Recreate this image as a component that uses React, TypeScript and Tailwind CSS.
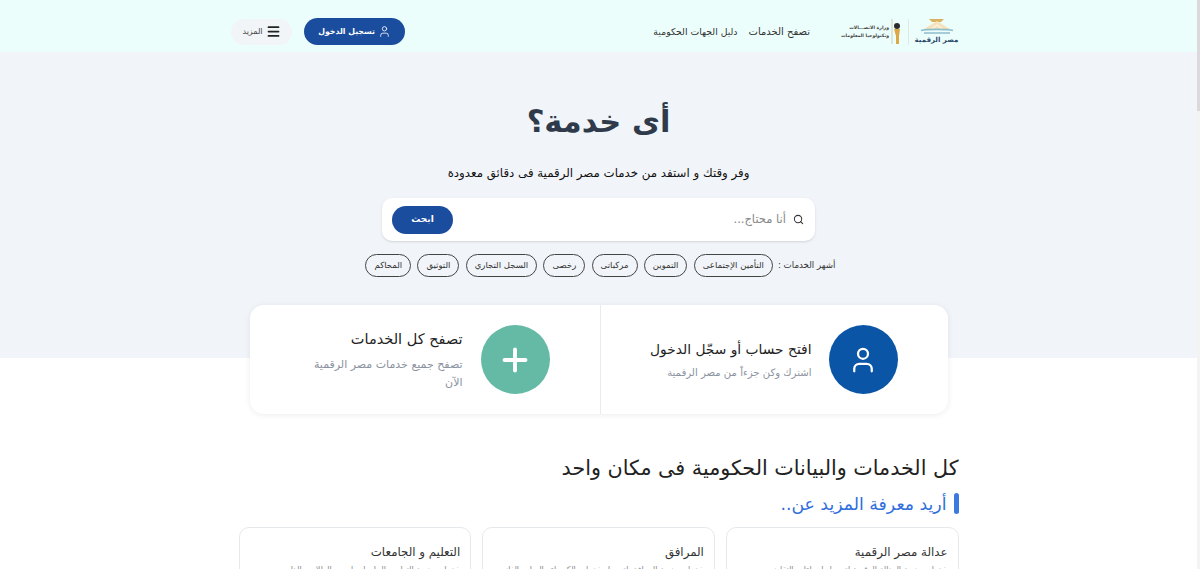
import React from 'react';
import { Menu, Plus, Search, User } from 'lucide-react';

const FONT = "font-['DejaVu_Sans',sans-serif]";

const POPULAR = ['التأمين الإجتماعى', 'التموين', 'مركباتى', 'رخصى', 'السجل التجاري', 'التوثيق', 'المحاكم'];

const TOPICS = [
    { title: 'عدالة مصر الرقمية', text: 'خدمات منصة العدالة الرقمية لتسهيل إجراءات التقاضي' },
    { title: 'المرافق', text: 'خدمات منصة المرافق لتسهيل خدمات الكهرباء والمياه والغاز' },
    { title: 'التعليم و الجامعات', text: 'خدمات منصة التعليم والجامعات لجميع الطلاب والدارسين' },
];

function Logo() {
    return (
        <div className="flex items-center gap-[6px]">
            <div className="flex w-[43px] flex-col items-center">
                <svg width="34" height="16" viewBox="0 0 34 16">
                    <path d="M9 1h15l-3 3h-9z" fill="#d9b25f" />
                    <path d="M4 11 17 3l13 8z" fill="#f6e3bb" />
                    <path d="M12 11l5-4 5 4" fill="none" stroke="#ffffff" strokeWidth="1" />
                    <path d="M1 12.5c5-1.5 27-1.5 32 0M4 15h26" fill="none" stroke="#8fbccb" strokeWidth="1.6" />
                </svg>
                <span className="text-[7px] leading-[12px] font-bold whitespace-nowrap text-[#2d4a6b]">مصر الرقمية</span>
            </div>
            <div className="h-[26px] w-px bg-[#dfe7e7]"></div>
            <div className="flex items-center gap-[2px]">
                <svg width="11" height="27" viewBox="0 0 11 27">
                    <path d="M1 1v25" stroke="#c9c3a8" strokeWidth="0.8" />
                    <circle cx="6" cy="8" r="3" fill="#2b2b2b" />
                    <path d="M3 11h6l-1 7v8H5v-8z" fill="#dca845" />
                </svg>
                <div className="w-[44px] text-[4.6px] leading-[8px] font-bold whitespace-nowrap text-[#444]">
                    <div>وزارة الاتصـــالات</div>
                    <div>وتكنولوجيا المعلومات</div>
                </div>
            </div>
        </div>
    );
}

function Header() {
    return (
        <header className="h-[52px] bg-[#ecfefb]">
            <div className="mr-[239px] flex h-full w-[727px] items-center justify-between pt-[11px]">
                <div className="flex items-center">
                    <Logo />
                    <a className="mr-[35px] text-[10px] text-[#333]">تصفح الخدمات</a>
                    <a className="mr-[11px] text-[9.3px] whitespace-nowrap text-[#333]">دليل الجهات الحكومية</a>
                </div>
                <div className="flex items-center gap-[12px]">
                    <button className="flex h-[27px] w-[101px] items-center justify-center gap-[3px] rounded-full bg-[#1b4d9e] text-[7.8px] font-bold text-white">
                        <User size={13} strokeWidth={1.5} />
                        تسجيل الدخول
                    </button>
                    <button className="flex h-[26px] w-[61px] items-center justify-center gap-[3px] rounded-full bg-[#f1f5f7] text-[8px] text-[#444]">
                        <Menu size={15} strokeWidth={2.8} className="text-[#222]" />
                        المزيد
                    </button>
                </div>
            </div>
        </header>
    );
}

function Hero() {
    return (
        <section className="flex h-[306px] flex-col items-center bg-[#f1f5f9]">
            <h1 className="mt-[44px] text-[30.5px] leading-[52px] font-bold text-[#2f3b4a]">أى خدمة؟</h1>
            <p className="mt-[16px] text-[11.8px] leading-[18px] text-[#111]">
                وفر وقتك و استفد من خدمات مصر الرقمية فى دقائق معدودة
            </p>
            <div className="mt-[16px] flex h-[43px] w-[433px] items-center justify-between rounded-[10px] bg-white pr-[11px] pl-[10px] shadow-sm">
                <div className="flex items-center gap-[7px] text-[11.5px] text-[#888]">
                    <Search size={11} strokeWidth={2.2} className="text-[#333]" />
                    أنا محتاج...
                </div>
                <button className="h-[28px] w-[61px] rounded-full bg-[#1b4d9e] text-[9px] font-bold text-white">ابحث</button>
            </div>
            <div className="mt-[13px] flex items-center pl-[4px]">
                <span className="ml-[5px] text-[8.7px] text-[#333]">أشهر الخدمات :</span>
                <div className="flex gap-[6.3px]">
                    {POPULAR.map((name) => (
                        <span key={name} className="flex h-[23px] items-center rounded-full border border-[#444] px-[8px] text-[8.5px] text-[#333]">
                            {name}
                        </span>
                    ))}
                </div>
            </div>
        </section>
    );
}

function ActionCards() {
    return (
        <div className="relative mx-auto -mt-[53px] flex h-[109px] w-[698px] rounded-[14px] bg-white shadow-[0_1px_6px_rgba(0,0,0,0.08)]">
            <div className="flex w-[348px] items-center gap-[17px] border-l border-[#e8ecef] pr-[50px]">
                <div className="flex h-[69px] w-[69px] shrink-0 items-center justify-center rounded-full bg-[#0b55a6] text-white">
                    <User size={30} strokeWidth={1.8} />
                </div>
                <div>
                    <div className="text-[13.8px] leading-[22px] text-[#222]">افتح حساب أو سجّل الدخول</div>
                    <div className="mt-[5px] text-[10.1px] leading-[16px] text-[#8b93a0]">اشترك وكن جزءاً من مصر الرقمية</div>
                </div>
            </div>
            <div className="flex flex-1 items-center gap-[18px] pr-[50px]">
                <div className="flex h-[69px] w-[69px] shrink-0 items-center justify-center rounded-full bg-[#64baa5] text-white">
                    <Plus size={36} strokeWidth={2.6} />
                </div>
                <div className="mt-[1px] w-[150px]">
                    <div className="text-[14.5px] leading-[22px] text-[#222]">تصفح كل الخدمات</div>
                    <div className="mt-[6px] text-[11px] leading-[18px] text-[#8b93a0]">تصفح جميع خدمات مصر الرقمية الآن</div>
                </div>
            </div>
        </div>
    );
}

function Topics() {
    return (
        <section className="mx-auto mt-[38px] w-[720px]">
            <h2 className="text-[20.7px] leading-[32px] text-[#222]">كل الخدمات والبيانات الحكومية فى مكان واحد</h2>
            <div className="mt-[5px] flex items-center gap-[7px]">
                <div className="h-[21px] w-[5px] rounded-full bg-[#3b78e0]"></div>
                <h3 className="mt-[1px] text-[17.3px] leading-[28px] text-[#2f6fdc]">أريد معرفة المزيد عن..</h3>
            </div>
            <div className="mt-[9px] grid grid-cols-3 gap-[11px]">
                {TOPICS.map((topic) => (
                    <div key={topic.title} className="h-[120px] rounded-[10px] border border-[#e6e9ec] bg-white px-[10px] pt-[15px]">
                        <div className="text-[11.8px] leading-[18px] text-[#333]">{topic.title}</div>
                        <div className="mt-[2px] text-[8px] leading-[14px] text-[#888]">{topic.text}</div>
                    </div>
                ))}
            </div>
        </section>
    );
}

export default function App() {
    return (
        <div dir="rtl" className={`relative h-screen overflow-hidden bg-white pr-[3px] ${FONT}`}>
            <Header />
            <Hero />
            <ActionCards />
            <Topics />
            {/* scrollbar */}
            <div className="absolute top-0 right-0 h-full w-[3px] bg-[#f3f3f4]">
                <div className="h-[111px] bg-[#dcd9dd]"></div>
            </div>
        </div>
    );
}
